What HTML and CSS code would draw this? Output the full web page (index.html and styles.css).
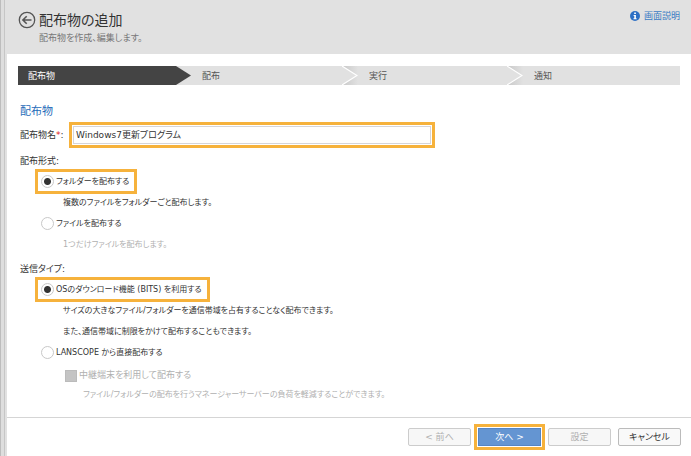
FILE: index.html
```html
<!DOCTYPE html>
<html lang="ja">
<head>
  <meta charset="UTF-8">
  <meta name="viewport" content="width=device-width, initial-scale=1.0">
  <title>配布物の追加</title>
  <link rel="stylesheet" href="styles.css">
</head>
<body>
  <header class="page-header">
    <a class="back" href="#" aria-label="戻る">
      <svg width="18" height="18" viewBox="0 0 18 18" fill="none" stroke="#555">
        <circle cx="9" cy="9" r="7.7" stroke-width="1.3"/>
        <path d="M13.5 9H5M8.7 5.2L4.9 9l3.8 3.8" stroke-width="1.6"/>
      </svg>
    </a>
    <div class="heading">
      <h1>配布物の追加</h1>
      <p>配布物を作成、編集します。</p>
    </div>
    <a class="help" href="#">
      <svg width="10" height="10" viewBox="0 0 10 10">
        <circle cx="5" cy="5" r="5" fill="#2d6fc4"/>
        <path d="M4.2 1.6h1.7v1.5H4.2zM3.6 4h2.3v3.2h.7v1H3.5v-1h.8V5h-.7z" fill="#fff"/>
      </svg>
      画面説明
    </a>
  </header>

  <ol class="steps">
    <li class="active">配布物</li>
    <li>
      配布
      <svg class="chevron" width="16" height="19" viewBox="0 0 16 19">
        <defs>
          <linearGradient id="shade">
            <stop offset="0" stop-color="#c8c8c8"/>
            <stop offset="1" stop-color="#e1e1e1"/>
          </linearGradient>
        </defs>
        <path d="M0 0h16v19H0l15-9.500z" fill="url(#shade)"/>
        <path d="M0 0l15 9.500L0 19" fill="none" stroke="#fff" stroke-width="1.200"/>
      </svg>
    </li>
    <li>
      実行
      <svg class="chevron" width="16" height="19" viewBox="0 0 16 19">
        <path d="M0 0h16v19H0l15-9.500z" fill="url(#shade)"/>
        <path d="M0 0l15 9.500L0 19" fill="none" stroke="#fff" stroke-width="1.200"/>
      </svg>
    </li>
    <li>通知</li>
  </ol>

  <form class="form">
    <h2>配布物</h2>
    <div class="name-row">
      <label for="name">配布物名<span class="required">*</span>:</label>
      <input type="text" id="name" class="highlight" value="Windows7更新プログラム">
    </div>

    <fieldset>
      <legend>配布形式:</legend>
      <label class="option highlight"><input type="radio" name="format" checked>フォルダーを配布する</label>
      <p class="note">複数のファイルをフォルダーごと配布します。</p>
      <label class="option"><input type="radio" name="format">ファイルを配布する</label>
      <p class="note muted">1つだけファイルを配布します。</p>
    </fieldset>

    <fieldset>
      <legend>送信タイプ:</legend>
      <label class="option highlight"><input type="radio" name="type" checked>OSのダウンロード機能 (BITS) を利用する</label>
      <p class="note">サイズの大きなファイル/フォルダーを通信帯域を占有することなく配布できます。</p>
      <p class="note">また、通信帯域に制限をかけて配布することもできます。</p>
      <label class="option"><input type="radio" name="type">LANSCOPE から直接配布する</label>
      <label class="sub-option muted"><input type="checkbox" disabled>中継端末を利用して配布する</label>
      <p class="sub-note muted">ファイル/フォルダーの配布を行うマネージャーサーバーの負荷を軽減することができます。</p>
    </fieldset>
  </form>

  <footer class="actions">
    <button type="button" disabled>&lt; 前へ</button>
    <button type="button" class="primary highlight">次へ &gt;</button>
    <button type="button" disabled>設定</button>
    <button type="button">キャンセル</button>
  </footer>
</body>
</html>
```
FILE: styles.css
```css
* {
  box-sizing: border-box;
}
body {
  margin: 0;
  padding-left: 7px;
  font-family: "DejaVu Sans", "Noto Sans CJK JP", sans-serif;
  font-feature-settings: "palt";
  font-size: 9px;
  line-height: 21px;
  color: #333;
  background: linear-gradient(to right, #bdbdbd 1px, #dedede 1px 4px, #c6c6c6 4px 5px, #e1e1e1 5px 7px, #fff 7px);
}
h1, h2, p, ol, fieldset {
  margin: 0;
  padding: 0;
  font-weight: normal;
}
.page-header {
  display: flex;
  align-items: flex-start;
  height: 54px;
  padding: 10px 11px 0;
  background-color: #e1e1e1;
}
.back {
  height: 18px;
  margin: 1px 3px 0 0;
}
.back svg {
  display: block;
}
.heading {
  flex: 1;
}
h1 {
  font-size: 14px;
  line-height: 20px;
}
.heading p {
  line-height: 16px;
  color: #777;
}
.help {
  display: flex;
  align-items: center;
  gap: 4px;
  line-height: 12px;
  color: #3a7cc4;
  text-decoration: none;
}
.steps {
  display: grid;
  grid-template-columns: 173fr 167fr 165fr 157fr;
  margin: 12px 11px 0;
  list-style: none;
  line-height: 20px;
  color: #555;
  background-color: #e1e1e1;
}
.steps li {
  display: flex;
  justify-content: space-between;
  height: 19px;
  padding-left: 11px;
}
.steps .active {
  padding-left: 10px;
  color: #fff;
  background-color: #444;
  clip-path: polygon(0 0, calc(100% - 15px) 0, 100% 50%, calc(100% - 15px) 100%, 0 100%);
}
.chevron {
  display: block;
}
.form {
  padding: 17px 13px 9px;
}
h2 {
  font-size: 11px;
  line-height: 20px;
  color: #1e6bb8;
}
.name-row {
  display: flex;
  align-items: center;
  gap: 8px;
  margin: 4px 0 7px;
}
.name-row label {
  width: 45px;
  line-height: 18px;
}
.required {
  color: #e02020;
}
input[type="text"] {
  width: 55%;
  max-width: 358px;
  height: 18px;
  padding: 0 2px;
  font: inherit;
  font-feature-settings: inherit;
  color: #333;
  background-color: #fff;
  border: 1px solid #d5d5d9;
}
.highlight {
  outline: 3px solid #f6b23c;
  outline-offset: 1px;
}
fieldset {
  display: flex;
  flex-direction: column;
  align-items: flex-start;
  margin-bottom: 4px;
  border: none;
}
legend {
  padding: 0;
  line-height: 20px;
}
.option {
  display: flex;
  align-items: center;
  gap: 2px;
  height: 17px;
  margin: 2px 0 2px 19px;
  padding: 0 4px 0 2px;
}
.option, .note, .sub-note {
  font-size: 8px;
}
input[type="radio"] {
  appearance: none;
  width: 13px;
  height: 13px;
  margin: 0;
  background-color: #fff;
  border: 1px solid #c8c8c8;
  border-radius: 50%;
}
input[type="radio"]:checked {
  background: radial-gradient(circle, #333 3px, #fff 4px);
}
.note {
  padding-left: 43px;
}
.muted {
  color: #b0b0b0;
}
.sub-option {
  display: flex;
  align-items: center;
  gap: 2px;
  margin: 2px 0 0 45px;
}
input[type="checkbox"] {
  appearance: none;
  width: 12px;
  height: 12px;
  margin: 0;
  background-color: #c4c4c4;
  border: 1px solid #bbb;
}
.sub-note {
  padding-left: 63px;
  line-height: 18px;
}
.actions {
  display: flex;
  justify-content: flex-end;
  gap: 7px;
  padding: 10px 10px 9px;
  border-top: 1px solid #d5d5d5;
}
button {
  width: 63px;
  height: 18px;
  padding: 0;
  font: inherit;
  font-feature-settings: inherit;
  line-height: 16px;
  color: #333;
  background-color: #f9f9f9;
  border: 1px solid #bbb;
  border-radius: 2px;
}
button:disabled {
  color: #b0b0b0;
  background-color: #f7f7f7;
  border-color: #ccc;
}
.primary {
  color: #fff;
  background-color: #6495d2;
  border-color: #5585c4;
  border-radius: 0;
}
```
